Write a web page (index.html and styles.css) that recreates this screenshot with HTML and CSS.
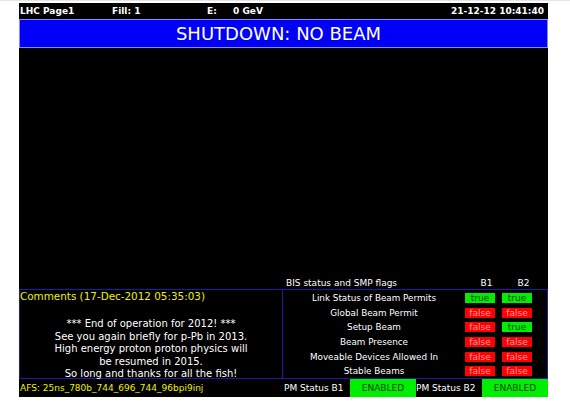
FILE: index.html
```html
<!DOCTYPE html>
<html>
<head>
    <title>LHC Page1</title>
    <link rel="stylesheet" href="styles.css">
</head>
<body>
    <div class="screen">
        <div class="topbar">
            <span class="page-name">LHC Page1</span>
            <span class="fill">Fill: 1</span>
            <span class="energy-label">E:</span>
            <span class="energy">0 GeV</span>
            <span class="clock">21-12-12 10:41:40</span>
        </div>
        <div class="banner">SHUTDOWN: NO BEAM</div>
        <div class="plot-area"></div>
        <div class="flags-head">
            <span class="flags-title">BIS status and SMP flags</span>
            <span class="beam-col">B1</span>
            <span class="beam-col">B2</span>
        </div>
        <div class="panels">
            <div class="comments">
                <div class="comments-title">Comments (17-Dec-2012 05:35:03)</div>
                <div class="comments-body">
                    *** End of operation for 2012! ***<br>
                    See you again briefly for p-Pb in 2013.<br>
                    High energy proton proton physics will<br>
                    be resumed in 2015.<br>
                    So long and thanks for all the fish!
                </div>
            </div>
            <div class="flags">
                <div class="flag-row">
                    <span class="flag-name">Link Status of Beam Permits</span>
                    <span class="badge on">true</span>
                    <span class="badge on">true</span>
                </div>
                <div class="flag-row">
                    <span class="flag-name">Global Beam Permit</span>
                    <span class="badge off">false</span>
                    <span class="badge off">false</span>
                </div>
                <div class="flag-row">
                    <span class="flag-name">Setup Beam</span>
                    <span class="badge off">false</span>
                    <span class="badge on">true</span>
                </div>
                <div class="flag-row">
                    <span class="flag-name">Beam Presence</span>
                    <span class="badge off">false</span>
                    <span class="badge off">false</span>
                </div>
                <div class="flag-row">
                    <span class="flag-name">Moveable Devices Allowed In</span>
                    <span class="badge off">false</span>
                    <span class="badge off">false</span>
                </div>
                <div class="flag-row">
                    <span class="flag-name">Stable Beams</span>
                    <span class="badge off">false</span>
                    <span class="badge off">false</span>
                </div>
            </div>
        </div>
        <div class="footer">
            <div class="afs">AFS: 25ns_780b_744_696_744_96bpi9inj</div>
            <div class="pm-label">PM Status B1</div>
            <div class="pm-state">ENABLED</div>
            <div class="pm-label">PM Status B2</div>
            <div class="pm-state">ENABLED</div>
        </div>
    </div>
</body>
</html>
```

FILE: styles.css
```css
body {
    margin: 0;
    background-color: #fff;
    font-family: "DejaVu Sans", sans-serif;
    color: #fff;
    border-top: 1px solid #e4e4e4;
}

.screen {
    width: 529px;
    margin: 2px 0 0 19px;
    background-color: #000;
    display: flex;
    flex-direction: column;
}

.topbar {
    display: flex;
    align-items: center;
    height: 16px;
    font-size: 9px;
    font-weight: bold;
    padding: 0 4px 0 1px;
}

.page-name {
    width: 92px;
}

.fill {
    width: 95px;
}

.energy-label {
    width: 26px;
}

.clock {
    margin-left: auto;
}

.banner {
    height: 27px;
    border: 1px solid #8888ff;
    background-color: #0000f8;
    text-align: center;
    font-size: 18px;
    line-height: 27px;
    padding-right: 10px;
}

.plot-area {
    height: 229px;
}

.flags-head {
    display: flex;
    align-items: center;
    height: 12px;
    font-size: 9px;
    padding-left: 267px;
}

.flags-title {
    width: 182px;
}

.beam-col {
    width: 37px;
    text-align: center;
}

.panels {
    display: flex;
    height: 90px;
}

.comments {
    width: 262px;
    border: 1px solid #1c1ca8;
    border-right: none;
}

.comments-title {
    color: #f0f000;
    font-size: 10.4px;
    height: 14px;
    line-height: 13px;
}

.comments-body {
    text-align: center;
    font-size: 10px;
    line-height: 12.5px;
    padding-top: 14px;
}

.flags {
    flex: 1;
    border: 1px solid #1c1ca8;
    padding-top: 1px;
}

.flag-row {
    display: flex;
    align-items: center;
    height: 14.6px;
    font-size: 8.8px;
}

.flag-name {
    width: 182px;
    text-align: center;
}

.badge {
    width: 30px;
    height: 10px;
    line-height: 10px;
    margin-right: 7px;
    text-align: center;
    font-size: 9px;
}

.badge.on {
    background-color: #00ee00;
    color: #004400;
}

.badge.off {
    background-color: #ff0000;
    color: #ff9a9a;
}

.footer {
    display: flex;
    align-items: center;
    height: 18px;
    font-size: 9px;
}

.afs {
    width: 264px;
    color: #f0f000;
    padding-left: 1px;
}

.pm-label {
    width: 66px;
}

.pm-state {
    width: 66px;
    height: 18px;
    line-height: 18px;
    background-color: #00ee00;
    color: #004400;
    text-align: center;
}
```
